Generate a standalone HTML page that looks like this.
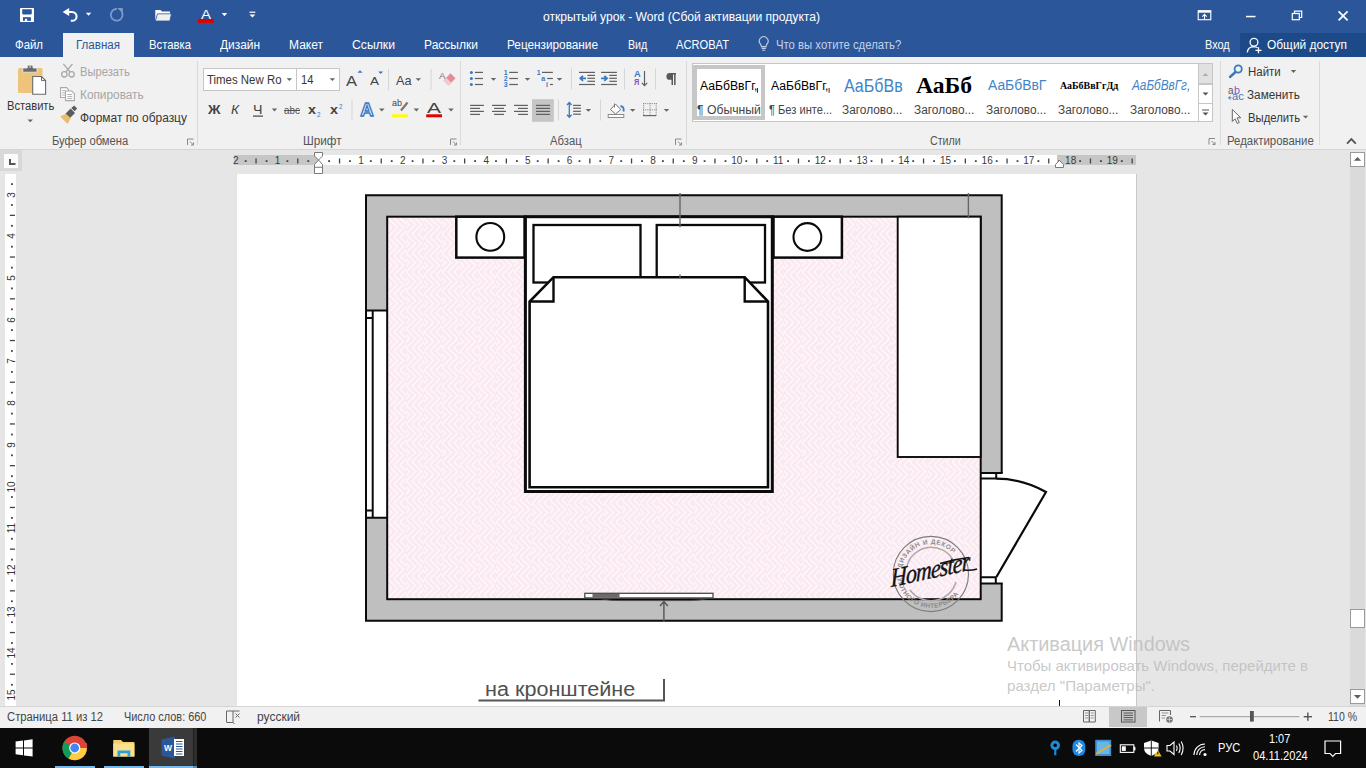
<!DOCTYPE html>
<html><head><meta charset="utf-8">
<style>
*{margin:0;padding:0;box-sizing:border-box}
html,body{width:1366px;height:768px;overflow:hidden;background:#e6e6e6;font-family:"Liberation Sans",sans-serif;font-size:12px;color:#262626}
body{position:relative}
.a{position:absolute;white-space:nowrap}
svg.a{overflow:visible}
</style></head><body>
<div class="a" style="left:0px;top:0px;width:1366px;height:33px;background:#2b579a;"></div>
<div class="a" style="left:0px;top:33px;width:1366px;height:24px;background:#2b579a;"></div>
<div class="a" style="left:0px;top:57px;width:1366px;height:92px;background:#f1f1f1;"></div>
<div class="a" style="left:0px;top:149px;width:1366px;height:1px;background:#d5d5d5;"></div>
<div class="a" style="left:0px;top:706px;width:1366px;height:22px;background:#f1f1f1;"></div>
<div class="a" style="left:0px;top:706px;width:1366px;height:1px;background:#d5d5d5;"></div>
<div class="a" style="left:0px;top:728px;width:1366px;height:40px;background:#0b0b0b;"></div>
<div class="a" style="left:543.4px;top:10.94px;font-size:12px;line-height:12px;color:#fff;transform:scaleX(1.0089);transform-origin:0 0;">открытый урок - Word (Сбой активации продукта)</div>
<div class="a" style="left:63px;top:33px;width:71px;height:24px;background:#f1f1f1;"></div>
<div class="a" style="left:15px;top:39.04px;font-size:12px;line-height:12px;color:#fff;transform:scaleX(0.9487);transform-origin:0 0;">Файл</div>
<div class="a" style="left:149px;top:39.04px;font-size:12px;line-height:12px;color:#fff;transform:scaleX(0.9415);transform-origin:0 0;">Вставка</div>
<div class="a" style="left:220px;top:39.04px;font-size:12px;line-height:12px;color:#fff;transform:scaleX(0.9915);transform-origin:0 0;">Дизайн</div>
<div class="a" style="left:289px;top:39.04px;font-size:12px;line-height:12px;color:#fff;transform:scaleX(1.0009);transform-origin:0 0;">Макет</div>
<div class="a" style="left:352px;top:39.04px;font-size:12px;line-height:12px;color:#fff;transform:scaleX(1.0178);transform-origin:0 0;">Ссылки</div>
<div class="a" style="left:424px;top:39.04px;font-size:12px;line-height:12px;color:#fff;transform:scaleX(1.0026);transform-origin:0 0;">Рассылки</div>
<div class="a" style="left:507px;top:39.04px;font-size:12px;line-height:12px;color:#fff;transform:scaleX(0.9820);transform-origin:0 0;">Рецензирование</div>
<div class="a" style="left:627.7px;top:39.04px;font-size:12px;line-height:12px;color:#fff;transform:scaleX(0.8886);transform-origin:0 0;">Вид</div>
<div class="a" style="left:676px;top:39.04px;font-size:12px;line-height:12px;color:#fff;transform:scaleX(0.9278);transform-origin:0 0;">ACROBAT</div>
<div class="a" style="left:76px;top:39.04px;font-size:12px;line-height:12px;color:#2b579a;transform:scaleX(0.9631);transform-origin:0 0;">Главная</div>
<div class="a" style="left:775.8px;top:38.84px;font-size:12px;line-height:12px;color:#c3d1e8;transform:scaleX(0.9438);transform-origin:0 0;">Что вы хотите сделать?</div>
<div class="a" style="left:1205px;top:39.04px;font-size:12px;line-height:12px;color:#fff;transform:scaleX(0.9096);transform-origin:0 0;">Вход</div>
<div class="a" style="left:1240px;top:33px;width:126px;height:24px;background:#1c4a89;"></div>
<div class="a" style="left:1266.5px;top:39.04px;font-size:12px;line-height:12px;color:#fff;transform:scaleX(0.9922);transform-origin:0 0;">Общий доступ</div>
<div class="a" style="left:6.6px;top:99.54px;font-size:12px;line-height:12px;color:#363636;transform:scaleX(0.9297);transform-origin:0 0;">Вставить</div>
<div class="a" style="left:79.8px;top:65.84px;font-size:12px;line-height:12px;color:#a6a6a6;transform:scaleX(0.9330);transform-origin:0 0;">Вырезать</div>
<div class="a" style="left:79.8px;top:88.54px;font-size:12px;line-height:12px;color:#a6a6a6;transform:scaleX(0.9857);transform-origin:0 0;">Копировать</div>
<div class="a" style="left:79.8px;top:111.84px;font-size:12px;line-height:12px;color:#363636;transform:scaleX(0.9934);transform-origin:0 0;">Формат по образцу</div>
<div class="a" style="left:52.4px;top:134.64px;font-size:12px;line-height:12px;color:#555;transform:scaleX(0.9344);transform-origin:0 0;">Буфер обмена</div>
<div class="a" style="left:302.7px;top:134.84px;font-size:12px;line-height:12px;color:#555;transform:scaleX(0.9776);transform-origin:0 0;">Шрифт</div>
<div class="a" style="left:550.3px;top:134.74px;font-size:12px;line-height:12px;color:#555;transform:scaleX(0.9385);transform-origin:0 0;">Абзац</div>
<div class="a" style="left:929.6px;top:134.64px;font-size:12px;line-height:12px;color:#555;transform:scaleX(0.8907);transform-origin:0 0;">Стили</div>
<div class="a" style="left:1226.7px;top:134.64px;font-size:12px;line-height:12px;color:#555;transform:scaleX(0.9494);transform-origin:0 0;">Редактирование</div>
<div class="a" style="left:1247.5px;top:65.64px;font-size:12px;line-height:12px;color:#363636;transform:scaleX(0.9547);transform-origin:0 0;">Найти</div>
<div class="a" style="left:1247px;top:89.24px;font-size:12px;line-height:12px;color:#363636;transform:scaleX(0.9789);transform-origin:0 0;">Заменить</div>
<div class="a" style="left:1247.5px;top:111.64px;font-size:12px;line-height:12px;color:#363636;transform:scaleX(0.9411);transform-origin:0 0;">Выделить</div>
<div class="a" style="left:237px;top:174px;width:899px;height:532px;background:#fff;"></div>
<div class="a" style="left:1136px;top:174px;width:1px;height:532px;background:#c8c8c8;"></div>
<div class="a" style="left:7.3px;top:710.54px;font-size:12px;line-height:12px;color:#444;transform:scaleX(0.9384);transform-origin:0 0;">Страница 11 из 12</div>
<div class="a" style="left:123.5px;top:710.54px;font-size:12px;line-height:12px;color:#444;transform:scaleX(0.9081);transform-origin:0 0;">Число слов: 660</div>
<div class="a" style="left:257px;top:710.54px;font-size:12px;line-height:12px;color:#444;">русский</div>
<div class="a" style="left:1327.6px;top:710.54px;font-size:12px;line-height:12px;color:#444;transform:scaleX(0.8751);transform-origin:0 0;">110 %</div>
<div class="a" style="left:1218.1px;top:741.84px;font-size:12px;line-height:12px;color:#fff;transform:scaleX(0.9238);transform-origin:0 0;">РУС</div>
<div class="a" style="left:1269px;top:732.84px;font-size:12px;line-height:12px;color:#fff;transform:scaleX(0.9076);transform-origin:0 0;">1:07</div>
<div class="a" style="left:1252.6px;top:750.14px;font-size:12px;line-height:12px;color:#fff;transform:scaleX(0.9261);transform-origin:0 0;">04.11.2024</div>
<svg class="a" style="left:0px;top:0px;" width="1366" height="768" viewBox="0 0 1366 768">
<defs>
<clipPath id="c1"><rect x="0" y="0" width="18" height="19"/></clipPath><clipPath id="c2"><rect x="18" y="0" width="18" height="19"/></clipPath>
<pattern id="hb" width="36" height="19" patternUnits="userSpaceOnUse" x="388" y="218">
<rect width="36" height="19" fill="#fae9f1"/>
<path clip-path="url(#c1)" d="M-24,-19 L-14.5,-9.5 L-24,0 M-24,0 L-14.5,9.5 L-24,19 M-24,19 L-14.5,28.5 L-24,38 M-18,-19 L-8.5,-9.5 L-18,0 M-18,0 L-8.5,9.5 L-18,19 M-18,19 L-8.5,28.5 L-18,38 M-12,-19 L-2.5,-9.5 L-12,0 M-12,0 L-2.5,9.5 L-12,19 M-12,19 L-2.5,28.5 L-12,38 M-6,-19 L3.5,-9.5 L-6,0 M-6,0 L3.5,9.5 L-6,19 M-6,19 L3.5,28.5 L-6,38 M0,-19 L9.5,-9.5 L0,0 M0,0 L9.5,9.5 L0,19 M0,19 L9.5,28.5 L0,38 M6,-19 L15.5,-9.5 L6,0 M6,0 L15.5,9.5 L6,19 M6,19 L15.5,28.5 L6,38 M12,-19 L21.5,-9.5 L12,0 M12,0 L21.5,9.5 L12,19 M12,19 L21.5,28.5 L12,38 M18,-19 L27.5,-9.5 L18,0 M18,0 L27.5,9.5 L18,19 M18,19 L27.5,28.5 L18,38 M24,-19 L33.5,-9.5 L24,0 M24,0 L33.5,9.5 L24,19 M24,19 L33.5,28.5 L24,38" stroke="#fef5f9" stroke-width="1.9" fill="none"/>
<path clip-path="url(#c1)" transform="translate(18,0)" d="M-24,-22 L-14.5,-12.5 L-24,-3 M-24,-3 L-14.5,6.5 L-24,16 M-24,16 L-14.5,25.5 L-24,35 M-18,-22 L-8.5,-12.5 L-18,-3 M-18,-3 L-8.5,6.5 L-18,16 M-18,16 L-8.5,25.5 L-18,35 M-12,-22 L-2.5,-12.5 L-12,-3 M-12,-3 L-2.5,6.5 L-12,16 M-12,16 L-2.5,25.5 L-12,35 M-6,-22 L3.5,-12.5 L-6,-3 M-6,-3 L3.5,6.5 L-6,16 M-6,16 L3.5,25.5 L-6,35 M0,-22 L9.5,-12.5 L0,-3 M0,-3 L9.5,6.5 L0,16 M0,16 L9.5,25.5 L0,35 M6,-22 L15.5,-12.5 L6,-3 M6,-3 L15.5,6.5 L6,16 M6,16 L15.5,25.5 L6,35 M12,-22 L21.5,-12.5 L12,-3 M12,-3 L21.5,6.5 L12,16 M12,16 L21.5,25.5 L12,35 M18,-22 L27.5,-12.5 L18,-3 M18,-3 L27.5,6.5 L18,16 M18,16 L27.5,25.5 L18,35 M24,-22 L33.5,-12.5 L24,-3 M24,-3 L33.5,6.5 L24,16 M24,16 L33.5,25.5 L24,35" stroke="#fef5f9" stroke-width="1.9" fill="none"/>
</pattern>
</defs>
<path d="M366,195.3 H1001.7 V620.7 H366 Z M387.2,216.7 V599.2 H980.7 V216.7 Z" fill="#bfbfbf" fill-rule="evenodd"/>
<rect x="388.2" y="217.7" width="591.5" height="380.5" fill="url(#hb)"/>
<!-- window -->
<rect x="367" y="311" width="19.5" height="207" fill="#fff"/>
<!-- door opening: clear gray -->
<rect x="981.5" y="474" width="22" height="109" fill="#fff"/>
<g stroke="#0a0a0a" fill="none">
<path d="M1001.7,473 V195.3 H366 V620.7 H1001.7 V583.5" stroke-width="2"/>
<rect x="387.2" y="216.7" width="593.5" height="382.5" stroke-width="2"/>
<path d="M980.7,473 H1002.7 M980.7,583.5 H1002.7" stroke-width="2"/>
<path d="M980.7,478.6 H996.2 V473 M980.7,577.3 H995.8 V583.5" stroke-width="2"/>
<path d="M996.2,478.6 C1013,478.6 1030,483 1046,492 L996.4,577" stroke-width="2.2"/>
<path d="M365,310.6 H388 M365,517.8 H388 M372.7,310.6 V517.8 M366,318 H372.7 M366,510.6 H372.7" stroke-width="2"/>
</g>
<!-- wardrobe -->
<rect x="897.7" y="216.7" width="83" height="240.3" fill="#fff" stroke="#0a0a0a" stroke-width="1.9"/>
<!-- nightstands -->
<rect x="456.3" y="216.7" width="68.3" height="40.9" fill="#fff" stroke="#0a0a0a" stroke-width="2.5"/>
<circle cx="490.3" cy="236.9" r="13.9" fill="none" stroke="#0a0a0a" stroke-width="2.1"/>
<rect x="773.5" y="216.7" width="68.4" height="40.9" fill="#fff" stroke="#0a0a0a" stroke-width="2.5"/>
<circle cx="807.4" cy="237" r="13.9" fill="none" stroke="#0a0a0a" stroke-width="2.1"/>
<!-- bed -->
<rect x="525.4" y="216.7" width="246.9" height="274.8" fill="#fff" stroke="#0a0a0a" stroke-width="3"/>
<rect x="533.5" y="225" width="107" height="57.5" fill="#fff" stroke="#0a0a0a" stroke-width="2.3"/>
<rect x="656.7" y="225" width="108.3" height="57.5" fill="#fff" stroke="#0a0a0a" stroke-width="2.3"/>
<path d="M529.6,487.2 V301.5 L553.5,277.2 H744.7 L768,301.5 V487.2 Z" fill="#fff" stroke="#0a0a0a" stroke-width="2.6"/>
<path d="M553.5,277.2 V301.5 H529.6 M744.7,277.2 V301.5 H768" fill="none" stroke="#0a0a0a" stroke-width="2.4"/>
<!-- markers -->
<path d="M680,193 V227.3 M680,274.5 V278.5 M968.4,193 V218.3" stroke="#666" stroke-width="1.4"/>
<!-- bracket tv -->
<rect x="584.8" y="593.3" width="128.2" height="4.6" fill="#fff" stroke="#4a4a4a" stroke-width="1.3"/>
<rect x="592.5" y="594" width="27" height="3.2" fill="#6a6a6a"/>
<path d="M598,598.3 Q612,601.2 622,600.6 H690 Q700,600.6 708,598.3" stroke="#444" stroke-width="0.9" fill="none"/>
<path d="M663.9,622 V602 M660,606 L663.9,601.5 L667.8,606" stroke="#555" stroke-width="1.4" fill="none"/>
<!-- label -->
<path d="M478.5,700.5 H664 V679" stroke="#555" stroke-width="2" fill="none"/>
<path d="M1059.5,700 V706" stroke="#111" stroke-width="1"/>
</svg>
<div class="a" style="left:485px;top:679.27px;font-size:20px;line-height:20px;color:#505050;transform:scaleX(1.0796);transform-origin:0 0;">на кронштейне</div>
<div class="a" style="left:0px;top:150px;width:22px;height:21px;background:#d8d8d8;"></div>
<div class="a" style="left:4px;top:154px;width:14px;height:14px;background:#fbfbfb;"></div>
<svg class="a" style="left:0px;top:0px;" width="22" height="174" viewBox="0 0 22 174"><path d="M10,159 V164 H15.5" stroke="#555" stroke-width="2" fill="none"/></svg>
<div class="a" style="left:234px;top:155px;width:902px;height:10px;background:#c6c6c6;"></div>
<div class="a" style="left:318.6px;top:155px;width:738.4px;height:10px;background:#fff;"></div>
<svg class="a" style="left:0px;top:0px;" width="1366" height="768" viewBox="0 0 1366 768"><rect x="244.8" y="160.2" width="1.8" height="1.8" fill="#444"/><rect x="255.4" y="158.5" width="1.3" height="5" fill="#444"/><rect x="265.7" y="160.2" width="1.8" height="1.8" fill="#444"/><rect x="286.5" y="160.2" width="1.8" height="1.8" fill="#444"/><rect x="297.1" y="158.5" width="1.3" height="5" fill="#444"/><rect x="307.4" y="160.2" width="1.8" height="1.8" fill="#444"/><rect x="328.2" y="160.2" width="1.8" height="1.8" fill="#444"/><rect x="338.9" y="158.5" width="1.3" height="5" fill="#444"/><rect x="349.1" y="160.2" width="1.8" height="1.8" fill="#444"/><rect x="369.9" y="160.2" width="1.8" height="1.8" fill="#444"/><rect x="380.6" y="158.5" width="1.3" height="5" fill="#444"/><rect x="390.8" y="160.2" width="1.8" height="1.8" fill="#444"/><rect x="411.7" y="160.2" width="1.8" height="1.8" fill="#444"/><rect x="422.3" y="158.5" width="1.3" height="5" fill="#444"/><rect x="432.5" y="160.2" width="1.8" height="1.8" fill="#444"/><rect x="453.4" y="160.2" width="1.8" height="1.8" fill="#444"/><rect x="464.0" y="158.5" width="1.3" height="5" fill="#444"/><rect x="474.2" y="160.2" width="1.8" height="1.8" fill="#444"/><rect x="495.1" y="160.2" width="1.8" height="1.8" fill="#444"/><rect x="505.7" y="158.5" width="1.3" height="5" fill="#444"/><rect x="516.0" y="160.2" width="1.8" height="1.8" fill="#444"/><rect x="536.8" y="160.2" width="1.8" height="1.8" fill="#444"/><rect x="547.5" y="158.5" width="1.3" height="5" fill="#444"/><rect x="557.7" y="160.2" width="1.8" height="1.8" fill="#444"/><rect x="578.6" y="160.2" width="1.8" height="1.8" fill="#444"/><rect x="589.2" y="158.5" width="1.3" height="5" fill="#444"/><rect x="599.4" y="160.2" width="1.8" height="1.8" fill="#444"/><rect x="620.3" y="160.2" width="1.8" height="1.8" fill="#444"/><rect x="630.9" y="158.5" width="1.3" height="5" fill="#444"/><rect x="641.1" y="160.2" width="1.8" height="1.8" fill="#444"/><rect x="662.0" y="160.2" width="1.8" height="1.8" fill="#444"/><rect x="672.6" y="158.5" width="1.3" height="5" fill="#444"/><rect x="682.9" y="160.2" width="1.8" height="1.8" fill="#444"/><rect x="703.7" y="160.2" width="1.8" height="1.8" fill="#444"/><rect x="714.3" y="158.5" width="1.3" height="5" fill="#444"/><rect x="724.6" y="160.2" width="1.8" height="1.8" fill="#444"/><rect x="745.4" y="160.2" width="1.8" height="1.8" fill="#444"/><rect x="756.1" y="158.5" width="1.3" height="5" fill="#444"/><rect x="766.3" y="160.2" width="1.8" height="1.8" fill="#444"/><rect x="787.2" y="160.2" width="1.8" height="1.8" fill="#444"/><rect x="797.8" y="158.5" width="1.3" height="5" fill="#444"/><rect x="808.0" y="160.2" width="1.8" height="1.8" fill="#444"/><rect x="828.9" y="160.2" width="1.8" height="1.8" fill="#444"/><rect x="839.5" y="158.5" width="1.3" height="5" fill="#444"/><rect x="849.7" y="160.2" width="1.8" height="1.8" fill="#444"/><rect x="870.6" y="160.2" width="1.8" height="1.8" fill="#444"/><rect x="881.2" y="158.5" width="1.3" height="5" fill="#444"/><rect x="891.5" y="160.2" width="1.8" height="1.8" fill="#444"/><rect x="912.3" y="160.2" width="1.8" height="1.8" fill="#444"/><rect x="922.9" y="158.5" width="1.3" height="5" fill="#444"/><rect x="933.2" y="160.2" width="1.8" height="1.8" fill="#444"/><rect x="954.0" y="160.2" width="1.8" height="1.8" fill="#444"/><rect x="964.7" y="158.5" width="1.3" height="5" fill="#444"/><rect x="974.9" y="160.2" width="1.8" height="1.8" fill="#444"/><rect x="995.8" y="160.2" width="1.8" height="1.8" fill="#444"/><rect x="1006.4" y="158.5" width="1.3" height="5" fill="#444"/><rect x="1016.6" y="160.2" width="1.8" height="1.8" fill="#444"/><rect x="1037.5" y="160.2" width="1.8" height="1.8" fill="#444"/><rect x="1048.1" y="158.5" width="1.3" height="5" fill="#444"/><rect x="1058.3" y="160.2" width="1.8" height="1.8" fill="#444"/><rect x="1079.2" y="160.2" width="1.8" height="1.8" fill="#444"/><rect x="1089.8" y="158.5" width="1.3" height="5" fill="#444"/><rect x="1100.0" y="160.2" width="1.8" height="1.8" fill="#444"/><rect x="1120.9" y="160.2" width="1.8" height="1.8" fill="#444"/><rect x="1131.5" y="158.5" width="1.3" height="5" fill="#444"/></svg>
<div class="a" style="left:233.1px;top:156.34px;font-size:10px;line-height:10px;color:#3a3a3a;">2</div>
<div class="a" style="left:274.8px;top:156.34px;font-size:10px;line-height:10px;color:#3a3a3a;">1</div>
<div class="a" style="left:358.2px;top:156.34px;font-size:10px;line-height:10px;color:#3a3a3a;">1</div>
<div class="a" style="left:399.9px;top:156.34px;font-size:10px;line-height:10px;color:#3a3a3a;">2</div>
<div class="a" style="left:441.7px;top:156.34px;font-size:10px;line-height:10px;color:#3a3a3a;">3</div>
<div class="a" style="left:483.4px;top:156.34px;font-size:10px;line-height:10px;color:#3a3a3a;">4</div>
<div class="a" style="left:525.1px;top:156.34px;font-size:10px;line-height:10px;color:#3a3a3a;">5</div>
<div class="a" style="left:566.8px;top:156.34px;font-size:10px;line-height:10px;color:#3a3a3a;">6</div>
<div class="a" style="left:608.5px;top:156.34px;font-size:10px;line-height:10px;color:#3a3a3a;">7</div>
<div class="a" style="left:650.3px;top:156.34px;font-size:10px;line-height:10px;color:#3a3a3a;">8</div>
<div class="a" style="left:692.0px;top:156.34px;font-size:10px;line-height:10px;color:#3a3a3a;">9</div>
<div class="a" style="left:731.3px;top:156.34px;font-size:10px;line-height:10px;color:#3a3a3a;">10</div>
<div class="a" style="left:773.0px;top:156.34px;font-size:10px;line-height:10px;color:#3a3a3a;">11</div>
<div class="a" style="left:814.7px;top:156.34px;font-size:10px;line-height:10px;color:#3a3a3a;">12</div>
<div class="a" style="left:856.5px;top:156.34px;font-size:10px;line-height:10px;color:#3a3a3a;">13</div>
<div class="a" style="left:898.2px;top:156.34px;font-size:10px;line-height:10px;color:#3a3a3a;">14</div>
<div class="a" style="left:939.9px;top:156.34px;font-size:10px;line-height:10px;color:#3a3a3a;">15</div>
<div class="a" style="left:981.6px;top:156.34px;font-size:10px;line-height:10px;color:#3a3a3a;">16</div>
<div class="a" style="left:1023.3px;top:156.34px;font-size:10px;line-height:10px;color:#3a3a3a;">17</div>
<div class="a" style="left:1065.1px;top:156.34px;font-size:10px;line-height:10px;color:#3a3a3a;">18</div>
<div class="a" style="left:1106.8px;top:156.34px;font-size:10px;line-height:10px;color:#3a3a3a;">19</div>
<svg class="a" style="left:0px;top:0px;" width="1366" height="768" viewBox="0 0 1366 768"><path d="M314.5,152.5 H322.5 V156 L318.5,160 L322.5,164.5 V173.5 H314.5 V164.5 L318.5,160 L314.5,156 Z M314.5,167.3 H322.5" fill="#fff" stroke="#7a7a7a" stroke-width="1"/><path d="M1059.5,160.5 L1063.5,164.5 V167.5 H1055.5 V164.5 Z" fill="#fff" stroke="#7a7a7a" stroke-width="1"/></svg>
<div class="a" style="left:5px;top:174px;width:11.2px;height:532px;background:#fff;"></div>
<svg class="a" style="left:0px;top:0px;" width="1366" height="768" viewBox="0 0 1366 768"><rect x="11" y="183.2" width="1.8" height="1.8" fill="#444"/><rect x="11" y="204.1" width="1.8" height="1.8" fill="#444"/><rect x="9.9" y="214.7" width="5" height="1.3" fill="#444"/><rect x="11" y="224.9" width="1.8" height="1.8" fill="#444"/><rect x="11" y="245.8" width="1.8" height="1.8" fill="#444"/><rect x="9.9" y="256.4" width="5" height="1.3" fill="#444"/><rect x="11" y="266.7" width="1.8" height="1.8" fill="#444"/><rect x="11" y="287.5" width="1.8" height="1.8" fill="#444"/><rect x="9.9" y="298.2" width="5" height="1.3" fill="#444"/><rect x="11" y="308.4" width="1.8" height="1.8" fill="#444"/><rect x="11" y="329.2" width="1.8" height="1.8" fill="#444"/><rect x="9.9" y="339.9" width="5" height="1.3" fill="#444"/><rect x="11" y="350.1" width="1.8" height="1.8" fill="#444"/><rect x="11" y="371.0" width="1.8" height="1.8" fill="#444"/><rect x="9.9" y="381.6" width="5" height="1.3" fill="#444"/><rect x="11" y="391.8" width="1.8" height="1.8" fill="#444"/><rect x="11" y="412.7" width="1.8" height="1.8" fill="#444"/><rect x="9.9" y="423.3" width="5" height="1.3" fill="#444"/><rect x="11" y="433.6" width="1.8" height="1.8" fill="#444"/><rect x="11" y="454.4" width="1.8" height="1.8" fill="#444"/><rect x="9.9" y="465.0" width="5" height="1.3" fill="#444"/><rect x="11" y="475.3" width="1.8" height="1.8" fill="#444"/><rect x="11" y="496.1" width="1.8" height="1.8" fill="#444"/><rect x="9.9" y="506.8" width="5" height="1.3" fill="#444"/><rect x="11" y="517.0" width="1.8" height="1.8" fill="#444"/><rect x="11" y="537.9" width="1.8" height="1.8" fill="#444"/><rect x="9.9" y="548.5" width="5" height="1.3" fill="#444"/><rect x="11" y="558.7" width="1.8" height="1.8" fill="#444"/><rect x="11" y="579.6" width="1.8" height="1.8" fill="#444"/><rect x="9.9" y="590.2" width="5" height="1.3" fill="#444"/><rect x="11" y="600.4" width="1.8" height="1.8" fill="#444"/><rect x="11" y="621.3" width="1.8" height="1.8" fill="#444"/><rect x="9.9" y="631.9" width="5" height="1.3" fill="#444"/><rect x="11" y="642.1" width="1.8" height="1.8" fill="#444"/><rect x="11" y="663.0" width="1.8" height="1.8" fill="#444"/><rect x="9.9" y="673.6" width="5" height="1.3" fill="#444"/><rect x="11" y="683.9" width="1.8" height="1.8" fill="#444"/></svg>
<div class="a" style="left:11.5px;top:194.5px;font-size:10px;line-height:10px;color:#333;transform:translate(-50%,-50%) rotate(-90deg)">3</div>
<div class="a" style="left:11.5px;top:236.2px;font-size:10px;line-height:10px;color:#333;transform:translate(-50%,-50%) rotate(-90deg)">4</div>
<div class="a" style="left:11.5px;top:277.9px;font-size:10px;line-height:10px;color:#333;transform:translate(-50%,-50%) rotate(-90deg)">5</div>
<div class="a" style="left:11.5px;top:319.6px;font-size:10px;line-height:10px;color:#333;transform:translate(-50%,-50%) rotate(-90deg)">6</div>
<div class="a" style="left:11.5px;top:361.3px;font-size:10px;line-height:10px;color:#333;transform:translate(-50%,-50%) rotate(-90deg)">7</div>
<div class="a" style="left:11.5px;top:403.1px;font-size:10px;line-height:10px;color:#333;transform:translate(-50%,-50%) rotate(-90deg)">8</div>
<div class="a" style="left:11.5px;top:444.8px;font-size:10px;line-height:10px;color:#333;transform:translate(-50%,-50%) rotate(-90deg)">9</div>
<div class="a" style="left:11.5px;top:486.5px;font-size:10px;line-height:10px;color:#333;transform:translate(-50%,-50%) rotate(-90deg)">10</div>
<div class="a" style="left:11.5px;top:528.2px;font-size:10px;line-height:10px;color:#333;transform:translate(-50%,-50%) rotate(-90deg)">11</div>
<div class="a" style="left:11.5px;top:569.9px;font-size:10px;line-height:10px;color:#333;transform:translate(-50%,-50%) rotate(-90deg)">12</div>
<div class="a" style="left:11.5px;top:611.7px;font-size:10px;line-height:10px;color:#333;transform:translate(-50%,-50%) rotate(-90deg)">13</div>
<div class="a" style="left:11.5px;top:653.4px;font-size:10px;line-height:10px;color:#333;transform:translate(-50%,-50%) rotate(-90deg)">14</div>
<div class="a" style="left:11.5px;top:695.1px;font-size:10px;line-height:10px;color:#333;transform:translate(-50%,-50%) rotate(-90deg)">15</div>
<div class="a" style="left:1350px;top:167px;width:15px;height:539px;background:#dadada;"></div>
<div class="a" style="left:1350px;top:152px;width:15px;height:15px;background:#fff;border:1px solid #9a9a9a"></div>
<svg class="a" style="left:0px;top:0px;" width="1366" height="768" viewBox="0 0 1366 768"><path d="M1353.8,160.8 L1357.5,157 L1361.2,160.8 Z" fill="#606060"/></svg>
<div class="a" style="left:1350px;top:609px;width:15px;height:19px;background:#fff;border:1px solid #9a9a9a"></div>
<div class="a" style="left:1350px;top:689px;width:15px;height:15px;background:#fff;border:1px solid #9a9a9a"></div>
<svg class="a" style="left:0px;top:0px;" width="1366" height="768" viewBox="0 0 1366 768"><path d="M1353.8,695 L1357.5,698.8 L1361.2,695 Z" fill="#606060"/></svg>
<svg class="a" style="left:0px;top:0px;" width="1366" height="768" viewBox="0 0 1366 768"><rect x="18" y="68" width="24.5" height="25" rx="1.5" fill="#eec47a"/><path d="M22.8,72.2 V68 H27.3 V66.5 Q27.3,65.2 28.6,65.2 H31.6 Q33,65.2 33,66.5 V68 H37 V72.2 Z" fill="#6a6a6a" stroke="#f1f1f1" stroke-width="0.8"/><rect x="29.4" y="66.4" width="1.4" height="1.2" fill="#fff"/><path d="M32.7,76.5 H41.5 L45.6,80.6 V94.3 H32.7 Z" fill="#fff" stroke="#6a6a6a" stroke-width="1.1"/><path d="M41.5,76.5 V80.6 H45.6" fill="none" stroke="#6a6a6a" stroke-width="1"/><path d="M27.5,119.5 H33 L30.25,122.3 Z" fill="#666"/><g stroke="#a9a9a9" stroke-width="1.3" fill="none"><circle cx="64.3" cy="74.3" r="2.7"/><circle cx="71.6" cy="74.3" r="2.7"/><path d="M65.8,72 L72.5,63.8 M70.1,72 L63.4,63.8"/></g><g stroke="#a9a9a9" stroke-width="1.1" fill="#fff"><path d="M60.6,87.6 H66.5 L68.5,89.6 V97.5 H60.6 Z"/><path d="M65.5,91 H71.7 L74.4,93.7 V100.6 H65.5 Z"/><path d="M62.2,90.5 H65.5 M62.2,92.8 H65.5 M62.2,95 H65.5 M67.3,94.5 H72.3 M67.3,96.6 H72.3 M67.3,98.6 H72.3" stroke-width="0.9"/></g><path d="M60.2,116.6 L66.2,113.6 L70.8,118.2 L67.6,124 Z" fill="#e9bd6f"/><path d="M65.6,113.4 L70.6,108.6 L75,113 L70.2,117.8 Z" fill="#5c5c5c"/><path d="M71.3,108 L74.2,105.4 L77.2,108.4 L74.5,111.2 Z" fill="#5c5c5c"/></svg>
<div class="a" style="left:203px;top:68px;width:94px;height:23px;background:#fff;border:1px solid #c6c6c6"></div>
<div class="a" style="left:296px;top:68px;width:44px;height:23px;background:#fff;border:1px solid #c6c6c6"></div>
<div class="a" style="left:206.9px;top:73.54px;font-size:12px;line-height:12px;color:#363636;transform:scaleX(0.9523);transform-origin:0 0;">Times New Ro</div>
<div class="a" style="left:300.7px;top:73.54px;font-size:12px;line-height:12px;color:#363636;transform:scaleX(0.9357);transform-origin:0 0;">14</div>
<svg class="a" style="left:0px;top:0px;" width="1366" height="768" viewBox="0 0 1366 768"><path d="M286.6,78.3 H292.1 L289.3,81.1 Z" fill="#666"/><path d="M329.6,78.3 H335.1 L332.4,81.1 Z" fill="#666"/><path d="M357.5,72.8 L360,70.3 L362.5,72.8 Z" fill="#3a78c0"/><path d="M378.2,71.5 L383.2,71.5 L380.7,74 Z" fill="#3a78c0"/><path d="M388.5,69 V90 M431,69 V90" stroke="#d5d5d5" stroke-width="1"/><path d="M415.6,78.3 H421.1 L418.3,81.1 Z" fill="#666"/><path d="M443.5,80.5 L450.5,73.3 L455.5,78.3 L448.5,85.5 Z" fill="#e68c98"/><path d="M443.5,80.5 L446.3,77.7 L451.3,82.7 L448.5,85.5 Z" fill="#f6c9cf"/><path d="M271.8,108.6 H277.2 L274.5,111.4 Z" fill="#666"/><path d="M379.1,108.6 H384.6 L381.8,111.4 Z" fill="#666"/><path d="M413.6,108.6 H419.1 L416.4,111.4 Z" fill="#666"/><path d="M448.2,108.6 H453.8 L451.0,111.4 Z" fill="#666"/><path d="M352,100 V120" stroke="#d5d5d5" stroke-width="1"/><rect x="253" y="115.5" width="10" height="1.2" fill="#444"/><rect x="284" y="110" width="16" height="1" fill="#555"/><rect x="392" y="114.3" width="16" height="3" fill="#ffff00"/><path d="M401,110.5 L407.5,102.5" stroke="#777" stroke-width="2.2"/><rect x="426.2" y="114.3" width="15.8" height="3" fill="#e00000"/><path d="M197.5,61 V145 M460.5,61 V145 M686.5,61 V145 M1220.5,61 V145 M1319.5,61 V145" stroke="#d9d9d9" stroke-width="1"/><path d="M187.5,145 V139 H193.5" stroke="#888" stroke-width="1" fill="none"/><path d="M190.0,141.5 L193.5,145 M193.5,142.5 V145 H191.0" stroke="#888" stroke-width="1" fill="none"/><path d="M450.5,145 V139 H456.5" stroke="#888" stroke-width="1" fill="none"/><path d="M453.0,141.5 L456.5,145 M456.5,142.5 V145 H454.0" stroke="#888" stroke-width="1" fill="none"/><path d="M675.5,145 V139 H681.5" stroke="#888" stroke-width="1" fill="none"/><path d="M678.0,141.5 L681.5,145 M681.5,142.5 V145 H679.0" stroke="#888" stroke-width="1" fill="none"/><path d="M1209,144.5 V138.5 H1215" stroke="#888" stroke-width="1" fill="none"/><path d="M1211.5,141.0 L1215,144.5 M1215,142.0 V144.5 H1212.5" stroke="#888" stroke-width="1" fill="none"/></svg>
<div class="a" style="left:346px;top:73.75px;font-size:14px;line-height:14px;color:#444;transform:scaleX(1.1773);transform-origin:0 0;">A</div>
<div class="a" style="left:369.5px;top:76.29px;font-size:11px;line-height:11px;color:#444;transform:scaleX(1.2255);transform-origin:0 0;">A</div>
<div class="a" style="left:396px;top:74.00px;font-size:13px;line-height:13px;color:#444;transform:scaleX(0.9745);transform-origin:0 0;">Aa</div>
<div class="a" style="left:438.5px;top:72.38px;font-size:9px;line-height:9px;color:#777;transform:scaleX(1.0805);transform-origin:0 0;">A</div>
<div class="a" style="left:207.5px;top:103.30px;font-size:13px;line-height:13px;color:#444;font-weight:bold;transform:scaleX(1.0638);transform-origin:0 0;">Ж</div>
<div class="a" style="left:231.2px;top:103.30px;font-size:13px;line-height:13px;color:#444;font-style:italic;transform:scaleX(1.0428);transform-origin:0 0;">К</div>
<div class="a" style="left:253.3px;top:103.30px;font-size:13px;line-height:13px;color:#444;transform:scaleX(1.0955);transform-origin:0 0;">Ч</div>
<div class="a" style="left:284px;top:104.99px;font-size:11px;line-height:11px;color:#555;transform:scaleX(0.8901);transform-origin:0 0;">abc</div>
<div class="a" style="left:308.3px;top:103.30px;font-size:13px;line-height:13px;color:#444;font-weight:bold;transform:scaleX(1.1058);transform-origin:0 0;">x</div>
<div class="a" style="left:316.5px;top:110.57px;font-size:7px;line-height:7px;color:#3a78c0;transform:scaleX(0.8960);transform-origin:0 0;">2</div>
<div class="a" style="left:330px;top:103.30px;font-size:13px;line-height:13px;color:#444;font-weight:bold;transform:scaleX(1.1058);transform-origin:0 0;">x</div>
<div class="a" style="left:338.5px;top:102.57px;font-size:7px;line-height:7px;color:#3a78c0;transform:scaleX(0.8960);transform-origin:0 0;">2</div>
<svg class="a" style="left:0px;top:0px;" width="1366" height="768" viewBox="0 0 1366 768"><text x="360.2" y="116" font-family="Liberation Sans" font-size="18.5" font-weight="bold" fill="#e4edf8" stroke="#3a78c0" stroke-width="1.3" textLength="13.4" lengthAdjust="spacingAndGlyphs">A</text></svg>
<div class="a" style="left:392px;top:99.38px;font-size:9px;line-height:9px;color:#444;transform:scaleX(0.9984);transform-origin:0 0;">ab</div>
<div class="a" style="left:427px;top:100.30px;font-size:15px;line-height:15px;color:#444;transform:scaleX(1.3978);transform-origin:0 0;">A</div>
<svg class="a" style="left:0px;top:0px;" width="1366" height="768" viewBox="0 0 1366 768"><circle cx="471.4" cy="72.4" r="1.5" fill="#3a78c0"/><rect x="474.9" y="71.80" width="8.10" height="1.2" fill="#606060"/><circle cx="471.4" cy="78.5" r="1.5" fill="#3a78c0"/><rect x="474.9" y="77.90" width="8.10" height="1.2" fill="#606060"/><circle cx="471.4" cy="84.5" r="1.5" fill="#3a78c0"/><rect x="474.9" y="83.90" width="8.10" height="1.2" fill="#606060"/><path d="M490.8,77.9 H496.2 L493.5,80.7 Z" fill="#666"/><rect x="509.2" y="71.80" width="8.70" height="1.2" fill="#606060"/><rect x="509.2" y="77.90" width="8.70" height="1.2" fill="#606060"/><rect x="509.2" y="83.90" width="8.70" height="1.2" fill="#606060"/><path d="M524.8,77.9 H530.2 L527.5,80.7 Z" fill="#666"/><rect x="542" y="71.80" width="10.90" height="1.2" fill="#606060"/><rect x="547.2" y="77.90" width="5.70" height="1.2" fill="#606060"/><rect x="550" y="83.90" width="2.90" height="1.2" fill="#606060"/><path d="M556.8,77.9 H562.2 L559.5,80.7 Z" fill="#666"/><path d="M571.5,68.5 V89.5 M624.5,68.5 V89.5 M655.5,68.5 V89.5 M558.5,99.5 V120.5 M600.5,99.5 V120.5" stroke="#d5d5d5" stroke-width="1"/><rect x="579" y="71.80" width="16.00" height="1.2" fill="#606060"/><rect x="587.4" y="74.80" width="7.60" height="1.2" fill="#606060"/><rect x="587.4" y="77.70" width="7.60" height="1.2" fill="#606060"/><rect x="587.4" y="80.70" width="7.60" height="1.2" fill="#606060"/><rect x="579" y="83.90" width="16.00" height="1.2" fill="#606060"/><path d="M586,78.3 H581 M583,75.8 L580.3,78.3 L583,80.8" stroke="#3a78c0" stroke-width="1.8" fill="none"/><rect x="601.1" y="71.80" width="15.80" height="1.2" fill="#606060"/><rect x="609.3" y="74.80" width="7.60" height="1.2" fill="#606060"/><rect x="609.3" y="77.70" width="7.60" height="1.2" fill="#606060"/><rect x="609.3" y="80.70" width="7.60" height="1.2" fill="#606060"/><rect x="601.1" y="83.90" width="15.80" height="1.2" fill="#606060"/><path d="M601.1,78.3 H606.5 M604.3,75.8 L607,78.3 L604.3,80.8" stroke="#3a78c0" stroke-width="1.8" fill="none"/><path d="M644.5,71.1 V85.5 M641.8,82.8 L644.5,85.7 L647.2,82.8" stroke="#606060" stroke-width="1.2" fill="none"/><rect x="470.1" y="104.80" width="13.80" height="1.2" fill="#606060"/><rect x="492" y="104.80" width="14.00" height="1.2" fill="#606060"/><rect x="514" y="104.80" width="13.90" height="1.2" fill="#606060"/><rect x="470.1" y="107.80" width="9.90" height="1.2" fill="#606060"/><rect x="494.1" y="107.80" width="9.90" height="1.2" fill="#606060"/><rect x="518" y="107.80" width="9.90" height="1.2" fill="#606060"/><rect x="470.1" y="110.80" width="13.80" height="1.2" fill="#606060"/><rect x="492" y="110.80" width="14.00" height="1.2" fill="#606060"/><rect x="514" y="110.80" width="13.90" height="1.2" fill="#606060"/><rect x="470.1" y="113.80" width="9.90" height="1.2" fill="#606060"/><rect x="494.1" y="113.80" width="9.90" height="1.2" fill="#606060"/><rect x="518" y="113.80" width="9.90" height="1.2" fill="#606060"/><rect x="532" y="99.2" width="21.8" height="22.6" fill="#c5c5c5"/><rect x="536" y="104.80" width="14.00" height="1.2" fill="#606060"/><rect x="536" y="107.80" width="14.00" height="1.2" fill="#606060"/><rect x="536" y="110.80" width="14.00" height="1.2" fill="#606060"/><rect x="536" y="113.80" width="14.00" height="1.2" fill="#606060"/><path d="M569.3,102.8 V117 M567,105 L569.3,102.5 L571.6,105 M567,114.8 L569.3,117.3 L571.6,114.8" stroke="#3a78c0" stroke-width="1.3" fill="none"/><rect x="573.1" y="104.80" width="7.80" height="1.2" fill="#606060"/><rect x="573.1" y="107.60" width="7.80" height="1.2" fill="#606060"/><rect x="573.1" y="110.70" width="7.80" height="1.2" fill="#606060"/><rect x="573.1" y="113.60" width="7.80" height="1.2" fill="#606060"/><path d="M585.6,109.0 H591.1 L588.4,111.8 Z" fill="#666"/><rect x="608.2" y="114.5" width="15.6" height="3" fill="#fff" stroke="#8a8a8a" stroke-width="1"/><path d="M610.5,109.5 L615.5,104 L620.8,109.5 L615.5,114 Z" fill="#fff" stroke="#777" stroke-width="1"/><path d="M614.5,103.5 V107.5" stroke="#777" stroke-width="1"/><path d="M620.5,106 Q624.5,106.5 623.5,111.5" stroke="#3a78c0" stroke-width="1.8" fill="none"/><path d="M629.9,109.0 H635.4 L632.6,111.8 Z" fill="#666"/><rect x="643.2" y="103.2" width="0.9" height="0.9" fill="#777"/><rect x="645.0" y="103.2" width="0.9" height="0.9" fill="#777"/><rect x="646.8" y="103.2" width="0.9" height="0.9" fill="#777"/><rect x="648.6" y="103.2" width="0.9" height="0.9" fill="#777"/><rect x="650.4" y="103.2" width="0.9" height="0.9" fill="#777"/><rect x="652.2" y="103.2" width="0.9" height="0.9" fill="#777"/><rect x="654.0" y="103.2" width="0.9" height="0.9" fill="#777"/><rect x="655.8" y="103.2" width="0.9" height="0.9" fill="#777"/><rect x="643.2" y="109.4" width="0.9" height="0.9" fill="#777"/><rect x="645.0" y="109.4" width="0.9" height="0.9" fill="#777"/><rect x="646.8" y="109.4" width="0.9" height="0.9" fill="#777"/><rect x="648.6" y="109.4" width="0.9" height="0.9" fill="#777"/><rect x="650.4" y="109.4" width="0.9" height="0.9" fill="#777"/><rect x="652.2" y="109.4" width="0.9" height="0.9" fill="#777"/><rect x="654.0" y="109.4" width="0.9" height="0.9" fill="#777"/><rect x="655.8" y="109.4" width="0.9" height="0.9" fill="#777"/><rect x="643.2" y="103.2" width="0.9" height="0.9" fill="#777"/><rect x="643.2" y="105.0" width="0.9" height="0.9" fill="#777"/><rect x="643.2" y="106.8" width="0.9" height="0.9" fill="#777"/><rect x="643.2" y="108.6" width="0.9" height="0.9" fill="#777"/><rect x="643.2" y="110.4" width="0.9" height="0.9" fill="#777"/><rect x="643.2" y="112.2" width="0.9" height="0.9" fill="#777"/><rect x="643.2" y="114.0" width="0.9" height="0.9" fill="#777"/><rect x="649.6" y="103.2" width="0.9" height="0.9" fill="#777"/><rect x="649.6" y="105.0" width="0.9" height="0.9" fill="#777"/><rect x="649.6" y="106.8" width="0.9" height="0.9" fill="#777"/><rect x="649.6" y="108.6" width="0.9" height="0.9" fill="#777"/><rect x="649.6" y="110.4" width="0.9" height="0.9" fill="#777"/><rect x="649.6" y="112.2" width="0.9" height="0.9" fill="#777"/><rect x="649.6" y="114.0" width="0.9" height="0.9" fill="#777"/><rect x="655.7" y="103.2" width="0.9" height="0.9" fill="#777"/><rect x="655.7" y="105.0" width="0.9" height="0.9" fill="#777"/><rect x="655.7" y="106.8" width="0.9" height="0.9" fill="#777"/><rect x="655.7" y="108.6" width="0.9" height="0.9" fill="#777"/><rect x="655.7" y="110.4" width="0.9" height="0.9" fill="#777"/><rect x="655.7" y="112.2" width="0.9" height="0.9" fill="#777"/><rect x="655.7" y="114.0" width="0.9" height="0.9" fill="#777"/><rect x="643" y="115.00" width="13.30" height="1.2" fill="#6a6a6a"/><path d="M663.8,109.0 H669.2 L666.5,111.8 Z" fill="#666"/></svg>
<div class="a" style="left:503.8px;top:69.07px;font-size:7px;line-height:7px;color:#3a78c0;font-weight:bold;">1</div>
<div class="a" style="left:503.8px;top:75.17px;font-size:7px;line-height:7px;color:#3a78c0;font-weight:bold;">2</div>
<div class="a" style="left:503.8px;top:81.17px;font-size:7px;line-height:7px;color:#3a78c0;font-weight:bold;">3</div>
<div class="a" style="left:536.8px;top:69.07px;font-size:7px;line-height:7px;color:#3a78c0;font-weight:bold;">1</div>
<div class="a" style="left:541.3px;top:75.17px;font-size:7px;line-height:7px;color:#3a78c0;font-weight:bold;">a</div>
<div class="a" style="left:546px;top:81.17px;font-size:7px;line-height:7px;color:#3a78c0;font-weight:bold;">i</div>
<div class="a" style="left:633.7px;top:70.18px;font-size:9px;line-height:9px;color:#3a78c0;font-weight:bold;transform:scaleX(1.0308);transform-origin:0 0;">A</div>
<div class="a" style="left:634px;top:78.28px;font-size:9px;line-height:9px;color:#8a4fb5;font-weight:bold;transform:scaleX(0.8039);transform-origin:0 0;">Я</div>
<svg class="a" style="left:0px;top:0px;" width="1366" height="768" viewBox="0 0 1366 768"><path d="M669.8,73 H676 V74.6 H675.6 V85 H674.1 V74.6 H673 V85 H671.5 V79.8 H669.8 A3.4,3.4 0 0 1 669.8,73 Z" fill="#5a5a5a"/></svg>
<div class="a" style="left:692px;top:63px;width:507px;height:59px;background:#fff;border:1px solid #c6c6c6"></div>
<div class="a" style="left:692.7px;top:65.2px;width:72.2px;height:55.3px;background:#fff;border:4px solid #c6c6c6"></div>
<div class="a" style="left:1198px;top:63px;width:15px;height:21.3px;background:#e1e1e1;border:1px solid #c6c6c6"></div>
<div class="a" style="left:1198px;top:84px;width:15px;height:19.5px;background:#fff;border:1px solid #c6c6c6"></div>
<div class="a" style="left:1198px;top:103px;width:15px;height:19.2px;background:#fff;border:1px solid #c6c6c6"></div>
<svg class="a" style="left:0px;top:0px;" width="1366" height="768" viewBox="0 0 1366 768"><path d="M1202.5,76 L1205.5,73 L1208.5,76 Z" fill="#b0b0b0"/><path d="M1202.5,92.5 H1208.5 L1205.5,95.5 Z" fill="#555"/><rect x="1202" y="109.5" width="7" height="1" fill="#555"/><path d="M1202.5,112.5 H1208.5 L1205.5,115.5 Z" fill="#555"/></svg>
<div class="a" style="left:699.6px;top:80.14px;font-size:12px;line-height:12px;color:#000;transform:scaleX(1.0143);transform-origin:0 0;">АаБбВвГг,</div>
<div class="a" style="left:771.4px;top:80.14px;font-size:12px;line-height:12px;color:#000;transform:scaleX(1.0143);transform-origin:0 0;">АаБбВвГг,</div>
<div class="a" style="left:843.7px;top:77.26px;font-size:18px;line-height:18px;color:#3f84c8;transform:scaleX(0.8904);transform-origin:0 0;">АаБбВв</div>
<div class="a" style="left:916.2px;top:72.98px;font-size:24px;line-height:24px;color:#000;font-family:'Liberation Serif',serif;font-weight:bold;transform:scaleX(0.9843);transform-origin:0 0;">АаБб</div>
<div class="a" style="left:987.5px;top:78.35px;font-size:14px;line-height:14px;color:#3f84c8;transform:scaleX(0.9908);transform-origin:0 0;">АаБбВвГ</div>
<div class="a" style="left:1059.7px;top:80.29px;font-size:11px;line-height:11px;color:#000;font-family:'Liberation Serif',serif;font-weight:bold;transform:scaleX(0.9041);transform-origin:0 0;">АаБбВвГгДд</div>
<div class="a" style="left:1131.8px;top:78.35px;font-size:14px;line-height:14px;color:#3f84c8;font-style:italic;transform:scaleX(0.8414);transform-origin:0 0;">АаБбВвГг,</div>
<div class="a" style="left:696.9px;top:104.14px;font-size:12px;line-height:12px;color:#444;transform:scaleX(1.0155);transform-origin:0 0;">¶ Обычный</div>
<div class="a" style="left:769px;top:104.14px;font-size:12px;line-height:12px;color:#444;transform:scaleX(0.9256);transform-origin:0 0;">¶ Без инте...</div>
<div class="a" style="left:842px;top:104.14px;font-size:12px;line-height:12px;color:#444;transform:scaleX(0.9874);transform-origin:0 0;">Заголово...</div>
<div class="a" style="left:913.8px;top:104.14px;font-size:12px;line-height:12px;color:#444;transform:scaleX(0.9874);transform-origin:0 0;">Заголово...</div>
<div class="a" style="left:985.6px;top:104.14px;font-size:12px;line-height:12px;color:#444;transform:scaleX(0.9874);transform-origin:0 0;">Заголово...</div>
<div class="a" style="left:1057.7px;top:104.14px;font-size:12px;line-height:12px;color:#444;transform:scaleX(0.9874);transform-origin:0 0;">Заголово...</div>
<div class="a" style="left:1129.8px;top:104.14px;font-size:12px;line-height:12px;color:#444;transform:scaleX(0.9874);transform-origin:0 0;">Заголово...</div>
<svg class="a" style="left:0px;top:0px;" width="1366" height="768" viewBox="0 0 1366 768"><rect x="757" y="88" width="1" height="4.8" fill="#5a2030"/><rect x="828.6" y="88" width="1" height="4.8" fill="#5a2030"/></svg>
<svg class="a" style="left:0px;top:0px;" width="1366" height="768" viewBox="0 0 1366 768"><circle cx="1238.2" cy="69" r="3.6" fill="none" stroke="#3a78c0" stroke-width="1.8"/><path d="M1235.5,72 L1230,77" stroke="#3a78c0" stroke-width="2.4" stroke-linecap="round"/><path d="M1290.8,70.1 H1296.2 L1293.5,72.9 Z" fill="#666"/><path d="M1302.8,115.8 H1308.3 L1305.6,118.6 Z" fill="#666"/><path d="M1232.3,109.5 V121.5 L1235,118.8 L1237.3,123.5 L1239.3,122.5 L1237,117.8 L1240.8,117.8 Z" fill="#fff" stroke="#666" stroke-width="1"/><path d="M1230.5,96 L1228.6,97.8 L1230.5,99.6 M1228.6,97.8 H1231.5" stroke="#3a78c0" stroke-width="1" fill="none"/><path d="M1347,143.6 L1351.4,139.2 L1355.8,143.6" stroke="#555" stroke-width="1.9" fill="none"/></svg>
<div class="a" style="left:1228px;top:85.53px;font-size:10px;line-height:10px;color:#555;transform:scaleX(0.9888);transform-origin:0 0;">a</div>
<div class="a" style="left:1234.2px;top:85.53px;font-size:10px;line-height:10px;color:#8a4fb5;transform:scaleX(1.0787);transform-origin:0 0;">b</div>
<div class="a" style="left:1232px;top:92.33px;font-size:10px;line-height:10px;color:#3a78c0;transform:scaleX(1.1172);transform-origin:0 0;">ac</div>
<svg class="a" style="left:0px;top:0px;" width="1366" height="768" viewBox="0 0 1366 768"><rect x="20" y="7.9" width="14" height="14" rx="0.6" fill="#fff"/><path d="M22.2,9.2 H31.8 V13.4 L30.9,14.5 H23.1 L22.2,13.4 Z" fill="#2b579a"/><rect x="23" y="17.2" width="7.9" height="3.7" fill="#2b579a"/><rect x="24.9" y="18.9" width="2.3" height="2" fill="#fff"/><path d="M62.6,12 L69.2,7.9 V16.1 Z" fill="#fff"/><path d="M68,12 H72 A4.6,4.4 0 0 1 72,20.8 H70.8" fill="none" stroke="#fff" stroke-width="2"/><path d="M85.8,12.8 H91.3 L88.55,15.8 Z" fill="#fff"/><path d="M117,8.9 A5.9,5.9 0 1 0 121.8,11.8" fill="none" stroke="#7f9bc7" stroke-width="1.7"/><path d="M117.3,8 H122.8 V13.5 Z" fill="#7f9bc7"/><path d="M155.3,20.8 V10 H160.5 L162,11.6 H170 V20.8 Z" fill="#fff"/><path d="M157.5,13.8 H171.5 L169.8,21 H155.3 Z" fill="#f0f0f0" stroke="#2b579a" stroke-width="0.8"/><rect x="198" y="18.9" width="15.9" height="4" fill="#e00000"/><path d="M221.7,13 H227.2 L224.45,16.2 Z" fill="#fff"/><rect x="249.5" y="11.6" width="5.8" height="1.2" fill="#fff"/><path d="M249.5,14.5 H255.3 L252.4,17.6 Z" fill="#fff"/><rect x="1198.2" y="10.7" width="12.6" height="9" fill="none" stroke="#fff" stroke-width="1.1"/><rect x="1198.2" y="10.7" width="12.6" height="2" fill="#fff"/><path d="M1204.5,19.5 V14.5 M1202.3,16.6 L1204.5,14.3 L1206.7,16.6" fill="none" stroke="#fff" stroke-width="1.1"/><rect x="1246" y="15.8" width="9.5" height="1.5" fill="#fff"/><rect x="1292.3" y="13.5" width="7" height="6.2" fill="none" stroke="#fff" stroke-width="1.2"/><path d="M1294.5,13.5 V11.2 H1301.7 V17.5 H1299.3" fill="none" stroke="#fff" stroke-width="1.2"/><path d="M1338.6,11.3 L1347.6,20.3 M1347.6,11.3 L1338.6,20.3" stroke="#fff" stroke-width="1.7"/><path d="M761.4,46.6 Q761.4,44.9 760,43.5 A4.4,4.4 0 1 1 767.4,43.5 Q766,44.9 766,46.6 Z" fill="none" stroke="#c3d1e8" stroke-width="1.1"/><path d="M761.6,48.4 H765.8 M762.2,50.2 H765.2" stroke="#c3d1e8" stroke-width="1.1"/><circle cx="1254" cy="42.2" r="3.9" fill="none" stroke="#fff" stroke-width="1.3"/><path d="M1247.3,52.3 Q1248,46.8 1253.5,46.6 Q1256,46.7 1257.5,47.8" fill="none" stroke="#fff" stroke-width="1.3"/><path d="M1258.5,47.3 V53.3 M1255.5,50.3 H1261.5" stroke="#fff" stroke-width="1.3"/></svg>
<div class="a" style="left:201.2px;top:7.70px;font-size:13px;line-height:13px;color:#fff;transform:scaleX(1.1532);transform-origin:0 0;">A</div>
<svg class="a" style="left:0px;top:0px;" width="1366" height="768" viewBox="0 0 1366 768"><path d="M226.5,711 V722 M226.5,711 H233 V722.5 H226.5 M233,711 H239.5 M233,722.5 L234.5,724" fill="none" stroke="#666" stroke-width="1"/><path d="M235.5,713.5 L239.5,717.5 M239.5,713.5 L235.5,717.5" stroke="#666" stroke-width="1"/><path d="M1083.5,710.5 H1089.3 V722 H1083.5 Z M1089.3,710.5 H1095.3 V722 H1089.3 Z" fill="none" stroke="#666" stroke-width="1"/><path d="M1085,713 H1088 M1085,715.5 H1088 M1085,718 H1088 M1090.8,713 H1093.8 M1090.8,715.5 H1093.8 M1090.8,718 H1093.8" stroke="#888" stroke-width="0.9"/><rect x="1109" y="707" width="38" height="20" fill="#c8c8c8"/><rect x="1121.5" y="710.5" width="13.5" height="11.5" fill="none" stroke="#555" stroke-width="1"/><path d="M1123.5,713 H1133 M1123.5,715.3 H1133 M1123.5,717.6 H1133 M1123.5,719.9 H1133" stroke="#555" stroke-width="1"/><path d="M1159.5,721.5 V710.5 H1170.5 V715" fill="none" stroke="#666" stroke-width="1"/><path d="M1161.5,713 H1168.5 M1161.5,715.5 H1166 M1161.5,718 H1165" stroke="#888" stroke-width="0.9"/><circle cx="1169.5" cy="719.5" r="3.3" fill="#777"/><path d="M1167,719.5 H1172 M1169.5,717 V722" stroke="#ddd" stroke-width="0.7"/><rect x="1190" y="716" width="6" height="1.3" fill="#555"/><rect x="1199.7" y="716.2" width="99.6" height="1" fill="#9a9a9a"/><rect x="1250" y="711" width="3.8" height="10.6" fill="#555"/><rect x="1303.7" y="716" width="8.3" height="1.4" fill="#555"/><rect x="1307.15" y="712.5" width="1.4" height="8.3" fill="#555"/></svg>
<svg class="a" style="left:0px;top:0px;" width="1366" height="768" viewBox="0 0 1366 768"><path d="M15.6,741.6 L23,740.6 V747.4 H15.6 Z M24,740.4 L32.6,739.2 V747.4 H24 Z M15.6,748.4 H23 V755.2 L15.6,754.2 Z M24,748.4 H32.6 V756.6 L24,755.4 Z" fill="#fff"/><circle cx="74.7" cy="748" r="12.2" fill="#db4437"/><path d="M74.7,748 L64.1,741.9 A12.2,12.2 0 0 0 68.6,758.6 Z" fill="#0f9d58"/><path d="M74.7,748 L68.6,758.6 A12.2,12.2 0 0 0 86.9,748 Z" fill="#ffcd40"/><path d="M74.7,743 H86.9 A12.2,12.2 0 0 1 86.9,748 L74.7,748 Z" fill="#db4437"/><circle cx="74.7" cy="748" r="5.6" fill="#fff"/><circle cx="74.7" cy="748" r="4.4" fill="#4285f4"/><rect x="55" y="766" width="40" height="2" fill="#76b9ed"/><path d="M113.3,740 H121 L123,742 H134.4 V756.5 H113.3 Z" fill="#f5cf63"/><rect x="113.3" y="743.5" width="21.1" height="13" fill="#fbe18f"/><path d="M117.5,756.7 V750.5 H130.3 V756.7 H127.5 V753.3 H120.3 V756.7 Z" fill="#2a9fd8"/><rect x="104" y="766" width="40" height="2" fill="#76b9ed"/><rect x="149" y="728" width="44" height="40" fill="#3a3a3a"/><rect x="193" y="728" width="4" height="40" fill="#2e2e2e"/><rect x="193" y="728" width="0.8" height="40" fill="#1c1c1c"/><rect x="149" y="766" width="44" height="2" fill="#76b9ed"/><rect x="193" y="766" width="4" height="2" fill="#5b8db5"/><path d="M161.5,739.5 L175,736.6 V758.6 L161.5,755.8 Z" fill="#2b579a"/><rect x="174" y="739" width="10" height="17" fill="#fff"/><path d="M176,741.5 H182.5 M176,744 H182.5 M176,746.5 H182.5 M176,749 H182.5 M176,751.5 H182.5 M176,754 H182.5" stroke="#2b579a" stroke-width="1"/><circle cx="1055.2" cy="745.3" r="4.8" fill="#1e8ad6"/><circle cx="1055.2" cy="745.3" r="1.8" fill="#000"/><rect x="1054.2" y="749" width="2.2" height="6.3" fill="#1e8ad6"/><rect x="1072.5" y="739.8" width="12.8" height="16.2" rx="6" fill="#1e88e5"/><path d="M1076,744.5 L1082,750.5 L1079,753 V743 L1082,745.5 L1076,751.5" fill="none" stroke="#fff" stroke-width="1.1"/><rect x="1095.2" y="739.8" width="16" height="16.2" fill="#3d8fcf"/><rect x="1097" y="741.5" width="12.5" height="12.5" fill="#68b6e6"/><path d="M1096,754 L1111,745" stroke="#e5b13a" stroke-width="2"/><rect x="1120.3" y="744.8" width="13.5" height="7.6" fill="none" stroke="#fff" stroke-width="1.1"/><rect x="1133.8" y="746.8" width="1.6" height="3.6" fill="#fff"/><rect x="1121.8" y="746.3" width="4" height="4.6" fill="#fff"/><path d="M1144,743 L1151.3,740.6 L1158.6,743 V748 Q1158.6,753.5 1151.3,756 Q1144,753.5 1144,748 Z" fill="#fff"/><path d="M1151.3,740.6 V756 M1144,748 H1158.6" stroke="#000" stroke-width="0.9"/><path d="M1154,756.5 L1157.8,749.8 L1161.6,756.5 Z" fill="#f4c025"/><rect x="1157.4" y="751.8" width="0.9" height="2.6" fill="#000"/><path d="M1167,745.5 H1170 L1174,742 V754.5 L1170,751 H1167 Z" fill="none" stroke="#fff" stroke-width="1.1"/><path d="M1176.5,745.5 Q1178,748.2 1176.5,751 M1178.8,743.5 Q1181.5,748.2 1178.8,753 M1181.2,741.5 Q1185,748.2 1181.2,755" fill="none" stroke="#fff" stroke-width="1.1"/><path d="M1194,755 A11,11 0 0 1 1205,744 M1196.8,755 A8.2,8.2 0 0 1 1205,746.8 M1199.6,755 A5.4,5.4 0 0 1 1205,749.6" fill="none" stroke="#fff" stroke-width="1.1"/><circle cx="1205" cy="754.5" r="1.6" fill="#fff"/><path d="M1325,741 H1340.6 V753.5 H1335.5 L1332.8,756.3 L1330.1,753.5 H1325 Z" fill="none" stroke="#fff" stroke-width="1.2"/></svg>
<div class="a" style="left:163.5px;top:743.88px;font-size:9px;line-height:9px;color:#fff;font-weight:bold;transform:scaleX(0.9412);transform-origin:0 0;">W</div>
<div class="a" style="left:1007px;top:633.57px;font-size:20px;line-height:20px;color:rgba(186,186,186,0.8);transform:scaleX(0.9928);transform-origin:0 0;">Активация Windows</div>
<div class="a" style="left:1007px;top:658.30px;font-size:15px;line-height:15px;color:rgba(186,186,186,0.8);transform:scaleX(0.9979);transform-origin:0 0;">Чтобы активировать Windows, перейдите в</div>
<div class="a" style="left:1007px;top:678.30px;font-size:15px;line-height:15px;color:rgba(186,186,186,0.8);transform:scaleX(1.0043);transform-origin:0 0;">раздел &quot;Параметры&quot;.</div>
<svg class="a" style="left:0px;top:0px;" width="1366" height="768" viewBox="0 0 1366 768"><defs><path id="arcT" d="M901,574 A30,30 0 0 1 961,574"/><path id="arcB" d="M897,574 A34,34 0 0 0 965,574"/></defs><circle cx="930.9" cy="574" r="37.6" fill="none" stroke="#7c7c7c" stroke-width="1.1"/><path d="M907,566 A25,25 0 0 1 953,560" fill="none" stroke="#b0a8ac" stroke-width="1.6"/><path d="M956,582 A26,26 0 0 1 910,590" fill="none" stroke="#b0a8ac" stroke-width="1.6"/><text font-family="Liberation Sans" font-size="6.5" font-weight="bold" fill="#8a8a8a" letter-spacing="0.6"><textPath href="#arcT" startOffset="6%">ДИЗАЙН И ДЕКОР</textPath></text><text font-family="Liberation Sans" font-size="6.5" font-weight="bold" fill="#8a8a8a" letter-spacing="0.4"><textPath href="#arcB" startOffset="4%">УЮТНОГО ИНТЕРЬЕРА</textPath></text></svg>
<div class="a" style="left:891px;top:566px;font-family:'Liberation Serif',serif;font-style:italic;font-size:26px;line-height:26px;color:#111;-webkit-text-stroke:0.4px #111;letter-spacing:-1px;transform:rotate(-12deg) skewX(-12deg) scaleX(0.86);transform-origin:0 100%">Homester</div>
<svg class="a" style="left:0px;top:0px;" width="1366" height="768" viewBox="0 0 1366 768"><path d="M940,563.5 Q955,559 969,557.5" stroke="#111" stroke-width="1.6" fill="none"/><path d="M964,570 Q971,571 977,569" stroke="#111" stroke-width="1.5" fill="none"/></svg>
</body></html>
